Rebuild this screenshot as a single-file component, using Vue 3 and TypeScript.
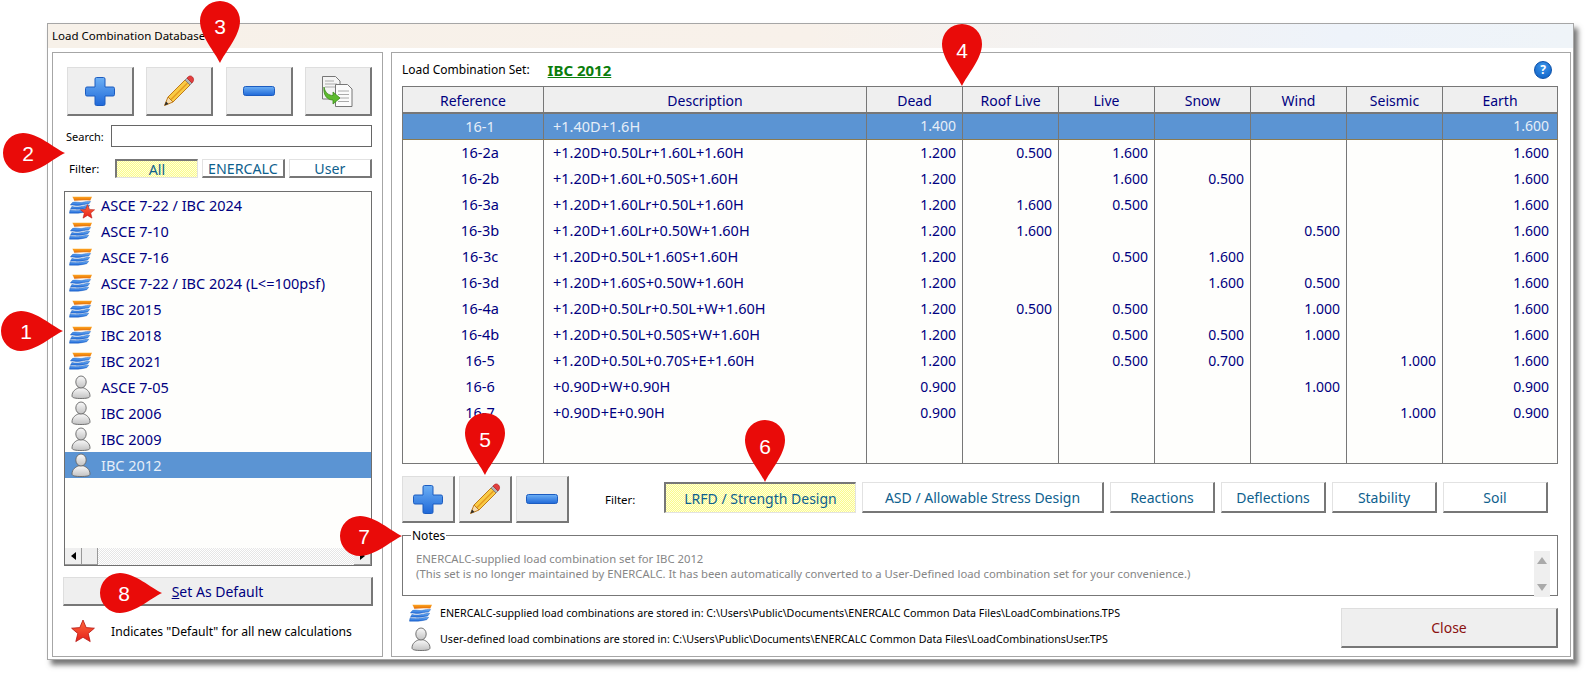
<script setup lang="ts">
interface LoadRow {
  ref: string
  desc: string
  values: string[]
}

const filters = ['All', 'ENERCALC', 'User']

const sets = [
  { name: 'ASCE 7-22 / IBC 2024', icon: 'enercalc', star: true },
  { name: 'ASCE 7-10', icon: 'enercalc' },
  { name: 'ASCE 7-16', icon: 'enercalc' },
  { name: 'ASCE 7-22 / IBC 2024 (L<=100psf)', icon: 'enercalc' },
  { name: 'IBC 2015', icon: 'enercalc' },
  { name: 'IBC 2018', icon: 'enercalc' },
  { name: 'IBC 2021', icon: 'enercalc' },
  { name: 'ASCE 7-05', icon: 'person' },
  { name: 'IBC 2006', icon: 'person' },
  { name: 'IBC 2009', icon: 'person' },
  { name: 'IBC 2012', icon: 'person', selected: true },
]

const columns = ['Reference', 'Description', 'Dead', 'Roof Live', 'Live', 'Snow', 'Wind', 'Seismic', 'Earth']
const colWidths = [141, 323, 96, 96, 96, 96, 96, 96, 115]

const rows: LoadRow[] = [
  { ref: '16-1', desc: '+1.40D+1.6H', values: ['1.400', '', '', '', '', '', '1.600'] },
  { ref: '16-2a', desc: '+1.20D+0.50Lr+1.60L+1.60H', values: ['1.200', '0.500', '1.600', '', '', '', '1.600'] },
  { ref: '16-2b', desc: '+1.20D+1.60L+0.50S+1.60H', values: ['1.200', '', '1.600', '0.500', '', '', '1.600'] },
  { ref: '16-3a', desc: '+1.20D+1.60Lr+0.50L+1.60H', values: ['1.200', '1.600', '0.500', '', '', '', '1.600'] },
  { ref: '16-3b', desc: '+1.20D+1.60Lr+0.50W+1.60H', values: ['1.200', '1.600', '', '', '0.500', '', '1.600'] },
  { ref: '16-3c', desc: '+1.20D+0.50L+1.60S+1.60H', values: ['1.200', '', '0.500', '1.600', '', '', '1.600'] },
  { ref: '16-3d', desc: '+1.20D+1.60S+0.50W+1.60H', values: ['1.200', '', '', '1.600', '0.500', '', '1.600'] },
  { ref: '16-4a', desc: '+1.20D+0.50Lr+0.50L+W+1.60H', values: ['1.200', '0.500', '0.500', '', '1.000', '', '1.600'] },
  { ref: '16-4b', desc: '+1.20D+0.50L+0.50S+W+1.60H', values: ['1.200', '', '0.500', '0.500', '1.000', '', '1.600'] },
  { ref: '16-5', desc: '+1.20D+0.50L+0.70S+E+1.60H', values: ['1.200', '', '0.500', '0.700', '', '1.000', '1.600'] },
  { ref: '16-6', desc: '+0.90D+W+0.90H', values: ['0.900', '', '', '', '1.000', '', '0.900'] },
  { ref: '16-7', desc: '+0.90D+E+0.90H', values: ['0.900', '', '', '', '', '1.000', '0.900'] },
]

const typeFilters = [
  { label: 'LRFD / Strength Design', width: 192, active: true },
  { label: 'ASD / Allowable Stress Design', width: 242 },
  { label: 'Reactions', width: 105 },
  { label: 'Deflections', width: 105 },
  { label: 'Stability', width: 105 },
  { label: 'Soil', width: 105 },
]

// callout pins: circle centre, rotation towards the tip, number position
const pins = [
  { n: 1, x: 21, y: 331, rot: -90, tx: 26, ty: 331 },
  { n: 2, x: 23, y: 153, rot: -90, tx: 28, ty: 153 },
  { n: 3, x: 220, y: 21, rot: 0, tx: 220, ty: 26 },
  { n: 4, x: 962, y: 44, rot: 0, tx: 962, ty: 50 },
  { n: 5, x: 485, y: 433, rot: 0, tx: 485, ty: 439 },
  { n: 6, x: 765, y: 440, rot: 0, tx: 765, ty: 446 },
  { n: 7, x: 360, y: 536, rot: -90, tx: 364, ty: 536 },
  { n: 8, x: 120, y: 593, rot: -90, tx: 124, ty: 593 },
]
</script>

<template>
  <div class="page">
    <svg class="defs" aria-hidden="true">
      <defs>
        <linearGradient id="blueFill" x1="0" y1="0" x2="0" y2="1">
          <stop offset="0" stop-color="#6db0f5" />
          <stop offset="1" stop-color="#1f68d8" />
        </linearGradient>
        <linearGradient id="orangeFill" x1="0" y1="0" x2="0" y2="1">
          <stop offset="0" stop-color="#ffa51e" />
          <stop offset="1" stop-color="#e06a08" />
        </linearGradient>
        <linearGradient id="greyFill" x1="0" y1="0" x2="0" y2="1">
          <stop offset="0" stop-color="#fafafa" />
          <stop offset="1" stop-color="#c2c2c2" />
        </linearGradient>
        <linearGradient id="starFill" x1="0" y1="0" x2="0" y2="1">
          <stop offset="0" stop-color="#ff6a3c" />
          <stop offset="1" stop-color="#e5201a" />
        </linearGradient>
        <symbol id="i-plus" viewBox="0 0 32 31">
          <path d="M12.500 1.500h7A1.500 1.500 0 0 1 21 3v8h8a1.500 1.500 0 0 1 1.500 1.500v6A1.500 1.500 0 0 1 29 20h-8v8a1.500 1.500 0 0 1-1.500 1.500h-7A1.500 1.500 0 0 1 11 28v-8H3a1.500 1.500 0 0 1-1.500-1.500v-6A1.500 1.500 0 0 1 3 11h8V3a1.500 1.500 0 0 1 1.500-1.500z" fill="url(#blueFill)" stroke="#1c5cc0" />
        </symbol>
        <symbol id="i-minus" viewBox="0 0 32 10">
          <rect x="0.500" y="0.500" width="31" height="9" rx="2" fill="url(#blueFill)" stroke="#1c5cc0" />
        </symbol>
        <symbol id="i-pencil" viewBox="0 0 32 32">
          <path d="M5 22 22 5l5 5-17 17z" fill="#f9cb45" stroke="#bf7a1a" />
          <path d="M8 24.500 24.500 8" stroke="#e59a20" stroke-width="1.500" fill="none" />
          <path d="M5 22l5 5-8.500 3.500z" fill="#f6dcae" stroke="#bf7a1a" />
          <path d="M1.500 30.500 3 26.500l2.500 2.500z" fill="#2a2a2a" />
          <path d="M22 5l2-2 5 5-2 2z" fill="#b4b4b4" stroke="#777" stroke-width="0.700" />
          <path d="M24 3c2-2.500 4-2.500 5.500-1s1.500 4-.500 6z" fill="#e23f3f" stroke="#b52020" stroke-width="0.700" />
        </symbol>
        <symbol id="i-copy" viewBox="0 0 31 31">
          <path d="M0.500 0.500h13l4.500 4.500v18H0.500z" fill="#f4f4f4" stroke="#777" />
          <path d="M3 5h9M3 8h12M3 11h12" stroke="#aaa" />
          <path d="M13.500 8.500h12l4.500 4.500v17.500H13.500z" fill="#fbfbfb" stroke="#777" />
          <path d="M16 15h11M16 18.500h11M16 22h11M16 25.500h11" stroke="#aaa" />
          <path d="M2 11c1 6 5 8.500 9 8.500V16l7 6-7 6v-4c-6 0-10-5-9-13z" fill="#5dbb2e" stroke="#3b8a1a" stroke-width="0.800" />
        </symbol>
        <symbol id="i-enercalc" viewBox="0 0 24 18">
          <path d="M3.500 0.500h20.500l-1.800 3.800c-5.500-.6-11-.4-16.700.2C5 3 4.200 1.600 3.500 0.500z" fill="url(#orangeFill)" />
          <path d="M3.500 6.500C7 5 11 7 14 6.200s6-1 8.500-.8L20.500 8C16 8 13 9.500 9.500 9.500S5 9 1.500 9z" fill="url(#blueFill)" stroke="#1a5dbd" stroke-width="0.500" />
          <path d="M3 10.500C7 11.500 12 11 15 10.200s5-1 6.500-.8L19.500 12c-4 .5-6.500 1.500-10 1.500s-5-.5-8 0z" fill="url(#blueFill)" stroke="#1a5dbd" stroke-width="0.500" />
          <path d="M1 14.500c4-.5 8 .5 11 0s6-1.500 8.500-1L18.500 16c-3.500.5-6 1.500-9 1.500s-6 0-9 0z" fill="url(#blueFill)" stroke="#1a5dbd" stroke-width="0.500" />
        </symbol>
        <symbol id="i-person" viewBox="0 0 20 24">
          <path d="M1 21c0-5 4-7 6-8 3-.5 4-.5 6 0 2 1 6 3 6 8 0 2-4 2.500-9 2.500S1 23 1 21z" fill="url(#greyFill)" stroke="#666" stroke-width="0.900" />
          <ellipse cx="10" cy="7" rx="5.200" ry="6" fill="url(#greyFill)" stroke="#666" stroke-width="0.900" />
        </symbol>
        <symbol id="i-star" viewBox="0 0 24 24">
          <polygon points="12,1 15.200,8.600 23.400,9.200 17.200,14.500 19.200,22.600 12,18.300 4.800,22.600 6.800,14.500 0.600,9.200 8.800,8.600" fill="url(#starFill)" stroke="#b51410" stroke-width="0.800" />
        </symbol>
      </defs>
    </svg>

    <div class="window">
      <div class="title-bar">Load Combination Database</div>
      <div class="window-body">
        <section class="panel left-panel">
          <div class="left-tools">
            <button class="tool big"><svg class="ic-plus"><use href="#i-plus" /></svg></button>
            <button class="tool big"><svg class="ic-pencil"><use href="#i-pencil" /></svg></button>
            <button class="tool big"><svg class="ic-minus"><use href="#i-minus" /></svg></button>
            <button class="tool big"><svg class="ic-copy"><use href="#i-copy" /></svg></button>
          </div>

          <div class="search-row">
            <label class="search-label">Search:</label>
            <input class="search-input" type="text" />
          </div>

          <div class="set-filter-row">
            <span class="set-filter-label">Filter:</span>
            <button
              v-for="(f, i) in filters"
              :key="f"
              class="toggle small"
              :class="{ active: i === 0 }"
            >{{ f }}</button>
          </div>

          <div class="set-list">
            <div class="set-items">
              <div v-for="s in sets" :key="s.name" class="set-item" :class="{ selected: s.selected }">
                <span class="set-icon">
                  <svg v-if="s.icon === 'enercalc'" class="ic-enercalc"><use href="#i-enercalc" /></svg>
                  <svg v-else class="ic-person"><use href="#i-person" /></svg>
                  <svg v-if="s.star" class="ic-star-small"><use href="#i-star" /></svg>
                </span>
                <span>{{ s.name }}</span>
              </div>
            </div>
            <div class="h-scroll">
              <span class="scroll-btn"><i class="arrow-left"></i></span>
              <span class="scroll-thumb"></span>
              <span class="scroll-track"></span>
              <span class="scroll-btn"><i class="arrow-right"></i></span>
            </div>
          </div>

          <button class="tool set-default"><u>S</u>et As Default</button>

          <div class="default-note">
            <svg class="ic-star"><use href="#i-star" /></svg>
            <span>Indicates "Default" for all new calculations</span>
          </div>
        </section>

        <section class="panel right-panel">
          <div class="set-heading">
            <span class="set-heading-label">Load Combination Set:</span>
            <a class="set-heading-name">IBC 2012</a>
            <span class="help">?</span>
          </div>

          <table class="combo-table">
            <colgroup>
              <col v-for="(w, i) in colWidths" :key="i" :style="{ width: w + 'px' }" />
            </colgroup>
            <thead>
              <tr>
                <th v-for="c in columns" :key="c">{{ c }}</th>
              </tr>
            </thead>
            <tbody>
              <tr v-for="(r, i) in rows" :key="r.ref" :class="{ selected: i === 0 }">
                <td class="cell-ref">{{ r.ref }}</td>
                <td class="cell-desc">{{ r.desc }}</td>
                <td v-for="(v, j) in r.values" :key="j" class="cell-num">{{ v }}</td>
              </tr>
              <tr class="filler">
                <td v-for="c in columns" :key="c"></td>
              </tr>
            </tbody>
          </table>

          <div class="combo-tools">
            <button class="tool medium"><svg class="ic-plus"><use href="#i-plus" /></svg></button>
            <button class="tool medium"><svg class="ic-pencil"><use href="#i-pencil" /></svg></button>
            <button class="tool medium"><svg class="ic-minus"><use href="#i-minus" /></svg></button>
            <span class="combo-filter-label">Filter:</span>
            <div class="combo-filters">
              <button
                v-for="f in typeFilters"
                :key="f.label"
                class="toggle wide"
                :class="{ active: f.active }"
                :style="{ width: f.width + 'px' }"
              >{{ f.label }}</button>
            </div>
          </div>

          <div class="notes">
            <span class="notes-legend">Notes</span>
            <p>ENERCALC-supplied load combination set for IBC 2012</p>
            <p>(This set is no longer maintained by ENERCALC. It has been automatically converted to a User-Defined load combination set for your convenience.)</p>
            <div class="v-scroll">
              <i class="arrow-up"></i>
              <i class="arrow-down"></i>
            </div>
          </div>

          <div class="footer">
            <div class="paths">
              <div class="path-row">
                <span class="path-icon"><svg class="ic-enercalc"><use href="#i-enercalc" /></svg></span>
                <span>ENERCALC-supplied load combinations are stored in: C:\Users\Public\Documents\ENERCALC Common Data Files\LoadCombinations.TPS</span>
              </div>
              <div class="path-row">
                <span class="path-icon"><svg class="ic-person"><use href="#i-person" /></svg></span>
                <span>User-defined load combinations are stored in: C:\Users\Public\Documents\ENERCALC Common Data Files\LoadCombinationsUser.TPS</span>
              </div>
            </div>
            <button class="tool close-btn">Close</button>
          </div>
        </section>
      </div>
    </div>

    <svg class="pins" viewBox="0 0 1589 677">
      <g v-for="p in pins" :key="p.n">
        <path
          :transform="`translate(${p.x} ${p.y}) rotate(${p.rot})`"
          d="M0 42C-5 31-20 15-20 0A20 20 0 1 1 20 0C20 15 5 31 0 42Z"
          fill="#e90b09"
        />
        <text :x="p.tx" :y="p.ty" class="pin-number">{{ p.n }}</text>
      </g>
    </svg>
  </div>
</template>

<style scoped>
.page {
  position: relative;
  width: 1589px;
  height: 677px;
  box-sizing: border-box;
  padding: 23px 0 0 47px;
  overflow: hidden;
  background: #fff;
  font-family: "Noto Sans", "Open Sans", sans-serif;
  color: #000;
}

.defs {
  display: block;
  width: 0;
  height: 0;
}

.window {
  width: 1527px;
  height: 637px;
  box-sizing: border-box;
  display: flex;
  flex-direction: column;
  border: 1px solid #a6a6a6;
  background: #fff;
  box-shadow: 4px 5px 5px rgba(60, 60, 60, 0.7);
}

.title-bar {
  height: 24px;
  flex: none;
  padding-left: 4px;
  font-size: 11.5px;
  line-height: 24px;
  background: linear-gradient(90deg, #f7f1e9 0%, #f8f1ea 50%, #eef3fa 85%, #eff4f8 100%);
}

.window-body {
  flex: 1;
  display: flex;
  gap: 8px;
  padding: 4px 2px 2px 4px;
  min-height: 0;
}

.panel {
  box-sizing: border-box;
  border: 1px solid #a6a6a6;
  display: flex;
  flex-direction: column;
}

.left-panel {
  width: 331px;
  flex: none;
  padding: 0 10px 0 11px;
}

.right-panel {
  flex: 1;
  padding: 0 12px 0 10px;
  min-width: 0;
}

button {
  font-family: inherit;
  padding: 0;
  cursor: default;
}

.tool {
  display: flex;
  align-items: center;
  justify-content: center;
  box-sizing: border-box;
  background: #efefef;
  border: 1px solid #dedede;
  border-right: 2px solid #777;
  border-bottom: 2px solid #777;
  color: #000080;
}

.big {
  width: 67px;
  height: 49px;
}

.medium {
  width: 53px;
  height: 47px;
}

.ic-plus {
  width: 32px;
  height: 31px;
}

.ic-pencil {
  width: 32px;
  height: 32px;
}

.ic-minus {
  width: 32px;
  height: 10px;
}

.ic-copy {
  width: 31px;
  height: 31px;
}

.left-tools {
  display: flex;
  justify-content: space-between;
  margin-top: 14px;
  padding: 0 0 0 3px;
}

.search-row {
  display: flex;
  align-items: center;
  margin-top: 9px;
  font-size: 11px;
  padding-left: 2px;
}

.search-label {
  width: 45px;
}

.search-input {
  flex: 1;
  height: 22px;
  box-sizing: border-box;
  border: 1px solid #666;
  background: #fff;
  padding: 0;
}

.set-filter-row {
  display: flex;
  align-items: center;
  margin-top: 12px;
  height: 19px;
  gap: 3.5px;
  font-size: 11.5px;
  padding-left: 5px;
}

.set-filter-label {
  width: 42.500px;
}

.toggle {
  box-sizing: border-box;
  background: #fff;
  border: 1px solid #e2e2e2;
  border-right: 2px solid #777;
  border-bottom: 2px solid #777;
  color: #0e5f8e;
}

.toggle.active {
  border: 1px solid #e2e2e2;
  border-top: 2px solid #777;
  border-left: 2px solid #777;
  background: repeating-conic-gradient(#fbfb8c 0 25%, #ffffdc 0 50%) 0 0 / 2px 2px;
}

.small {
  width: 84px;
  height: 19px;
  padding-top: 1px;
  font-size: 14.2px;
  line-height: 16px;
}

.wide {
  height: 31px;
  font-size: 14px;
}

.set-list {
  margin-top: 13px;
  height: 375px;
  box-sizing: border-box;
  border: 1px solid #6e6e6e;
  background: #fefefc;
  display: flex;
  flex-direction: column;
}

.set-items {
  flex: 1;
}

.set-item {
  display: flex;
  align-items: center;
  height: 26px;
  font-size: 14.5px;
  color: #000080;
  padding-left: 4px;
}

.set-item.selected {
  background: #5b94d3;
  color: #e6eef8;
}

.set-icon {
  position: relative;
  display: flex;
  align-items: center;
  justify-content: center;
  width: 23px;
  height: 26px;
  margin-right: 9px;
  flex: none;
}

.ic-enercalc {
  width: 23px;
  height: 18px;
}

.ic-person {
  width: 20px;
  height: 24px;
}

.ic-star-small {
  position: absolute;
  right: -3px;
  bottom: -1px;
  width: 15px;
  height: 15px;
}

.h-scroll {
  display: flex;
  height: 17px;
  flex: none;
}

.scroll-btn {
  width: 17px;
  display: flex;
  align-items: center;
  justify-content: center;
  background: #efefef;
  box-sizing: border-box;
  border-right: 1px solid #999;
  border-bottom: 1px solid #999;
}

.scroll-thumb {
  width: 16px;
  background: #efefef;
  box-sizing: border-box;
  border-right: 1px solid #999;
  border-bottom: 1px solid #999;
}

.scroll-track {
  flex: 1;
  background: repeating-conic-gradient(#e6e6e6 0 25%, #fff 0 50%) 0 0 / 2px 2px;
}

.arrow-left {
  border: 4px solid transparent;
  border-right: 5px solid #000;
  border-left: 0;
}

.arrow-right {
  border: 4px solid transparent;
  border-left: 5px solid #000;
  border-right: 0;
}

.set-default {
  width: 310px;
  height: 29px;
  margin: 11px 0 0 -1px;
  font-size: 14px;
  white-space: pre;
}

.default-note {
  display: flex;
  align-items: center;
  margin-top: 13px;
  padding-left: 7px;
  font-size: 12.2px;
}

.ic-star {
  width: 24px;
  height: 24px;
  margin-right: 16px;
}

.set-heading {
  display: flex;
  align-items: center;
  height: 33px;
  flex: none;
  font-size: 12px;
}

.set-heading-label {
  margin-right: 18px;
}

.set-heading-name {
  color: #0b7d0b;
  font-size: 15px;
  font-weight: 700;
  text-decoration: underline;
}

.help {
  width: 16px;
  height: 16px;
  margin: 0 6px 0 auto;
  border-radius: 50%;
  border: 1px solid #0a4fa8;
  background: radial-gradient(circle at 50% 30%, #3c96ea, #0a5cc4);
  color: #fff;
  font-size: 12px;
  font-weight: 700;
  line-height: 16px;
  text-align: center;
}

.combo-table {
  width: 1155px;
  height: 378px;
  flex: none;
  table-layout: fixed;
  border-collapse: collapse;
  border: 1px solid #777;
  background: #fefefc;
  font-size: 14px;
  color: #000080;
}

.combo-table th {
  height: 24px;
  padding: 1px 0 0;
  font-weight: 400;
  background: #efefef;
  border: 1px solid #777;
  border-bottom-width: 2px;
}

.combo-table td {
  height: 24px;
  padding: 0 0 2px;
  border-left: 1px solid #777;
  border-right: 1px solid #777;
}

.combo-table .filler td {
  height: auto;
  padding: 0;
}

.cell-ref {
  text-align: center;
  font-size: 14.5px;
  padding-left: 14px !important;
}

.cell-desc {
  font-size: 14.5px;
  padding-left: 9px !important;
}

.cell-num {
  text-align: right;
  padding-right: 6px !important;
}

.cell-num:last-child {
  padding-right: 8px !important;
}

.combo-table tr.selected td {
  height: 23px;
  background: #5b94d3;
  color: #e6eef8;
  border-top: 1px solid #8a7a50;
  border-bottom: 1px solid #8a7a50;
}

.combo-tools {
  display: flex;
  align-items: flex-start;
  gap: 4px;
  margin-top: 12px;
  flex: none;
}

.combo-filter-label {
  font-size: 11.5px;
  margin: 16px 0 0 32px;
  width: 55px;
  flex: none;
}

.combo-filters {
  display: flex;
  gap: 6px;
  margin-top: 6px;
}

.notes {
  position: relative;
  margin-top: 12px;
  height: 61px;
  flex: none;
  box-sizing: border-box;
  border: 1px solid #777;
  padding: 15px 0 0 13px;
  font-size: 11.3px;
  line-height: 15px;
  color: #868686;
}

.notes p {
  margin: 0;
}

.notes-legend {
  position: absolute;
  left: 8px;
  top: -9px;
  padding: 0 1px;
  background: #fff;
  font-size: 12px;
  line-height: 17px;
  color: #000;
}

.v-scroll {
  position: absolute;
  right: 7px;
  top: 15px;
  bottom: -2px;
  width: 16px;
  background: #efefef;
  display: flex;
  flex-direction: column;
  align-items: center;
  justify-content: space-between;
  padding: 6px 0;
  box-sizing: border-box;
}

.arrow-up {
  border: 5px solid transparent;
  border-bottom: 7px solid #aaa;
  border-top: 0;
}

.arrow-down {
  border: 5px solid transparent;
  border-top: 7px solid #aaa;
  border-bottom: 0;
}

.footer {
  display: flex;
  justify-content: space-between;
  margin-top: 4px;
  flex: none;
}

.paths {
  display: flex;
  flex-direction: column;
}

.path-row {
  display: flex;
  align-items: center;
  height: 26px;
  font-size: 10.7px;
}

.path-icon {
  display: flex;
  justify-content: center;
  width: 23px;
  margin: 0 8px 0 7px;
}

.close-btn {
  width: 217px;
  height: 40px;
  margin-top: 8px;
  font-size: 14px;
  color: #8b1010;
}

.pins {
  position: absolute;
  left: 0;
  top: 0;
  width: 1589px;
  height: 677px;
  pointer-events: none;
}

.pin-number {
  fill: #fff;
  font-family: "Liberation Sans", sans-serif;
  font-size: 21px;
  text-anchor: middle;
  dominant-baseline: central;
}
</style>
